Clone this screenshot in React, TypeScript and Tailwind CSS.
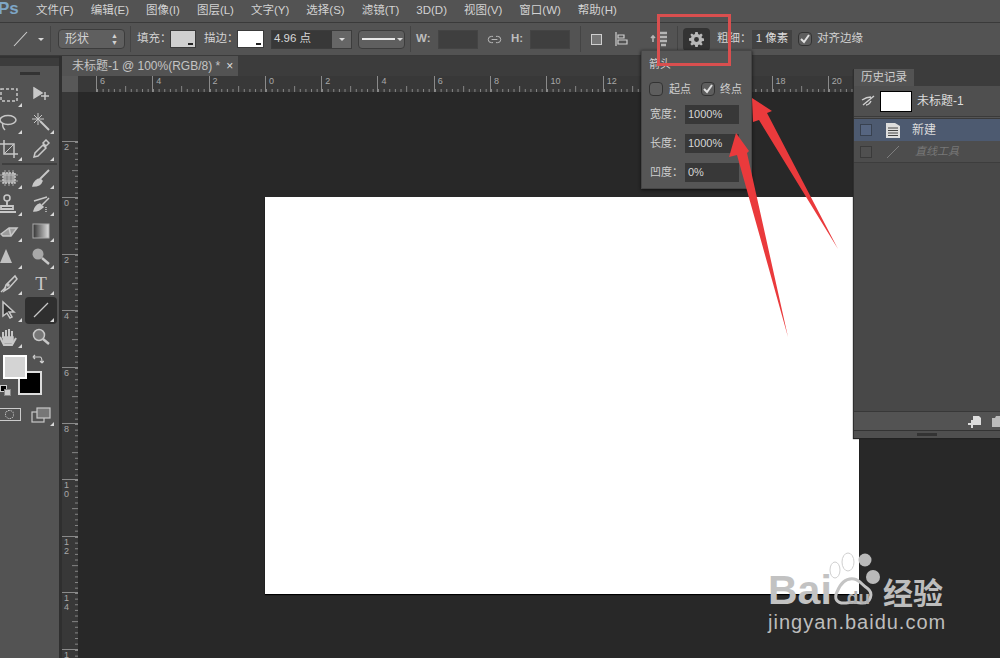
import type { ReactNode } from 'react'
import { Link2 } from 'lucide-react'

const cjk = "font-['Liberation_Sans','Noto_Sans_CJK_SC',sans-serif]"

const menus = ['文件(F)', '编辑(E)', '图像(I)', '图层(L)', '文字(Y)', '选择(S)', '滤镜(T)', '3D(D)', '视图(V)', '窗口(W)', '帮助(H)']
// 14, 16 sit under the arrow popup and 22 under the history panel
const hLabels = ['6', '4', '2', '0', '2', '4', '6', '8', '10', '12', '', '', '18', '20', '']
const vLabels = ['2', '0', '2', '4', '6', '8', '10', '12', '14', '16']

function HTicks() {
  return (
    <svg width="56" height="6" className="block">
      {[0, 1, 2, 3, 4, 5, 6, 7, 8, 9].map((i) => (
        <line key={i} x1={i * 5.63 + 0.5} x2={i * 5.63 + 0.5} y1={i === 5 ? 0 : 3} y2="6" stroke="#9a9a9a" strokeWidth="0.8" />
      ))}
    </svg>
  )
}

function VTicks() {
  return (
    <svg width="6" height="56" className="block shrink-0">
      {[0, 1, 2, 3, 4, 5, 6, 7, 8, 9].map((i) => (
        <line key={i} y1={i * 5.63 + 0.5} y2={i * 5.63 + 0.5} x1={i === 5 ? 0 : 3} x2="6" stroke="#9a9a9a" strokeWidth="0.8" />
      ))}
    </svg>
  )
}

function Tool({ children, active, corner = true, tight }: { children: ReactNode; active?: boolean; corner?: boolean; tight?: boolean }) {
  return (
    <div className={`relative flex w-8 items-center justify-center ${tight ? 'h-[26.500px]' : 'h-[27px]'} ${active ? 'rounded-sm bg-[#2f2f2f]' : ''}`}>
      {children}
      {corner && <span className="absolute right-[3px] bottom-[2px] h-0 w-0 border-b-[4px] border-l-[4px] border-b-[#d8d8d8] border-l-transparent" />}
    </div>
  )
}

function Ico({ children }: { children: ReactNode }) {
  return (
    <svg width="20" height="20" viewBox="0 0 20 20" fill="none" stroke="#c8c8c8" strokeWidth="1.5">
      {children}
    </svg>
  )
}

function Field({ label, value }: { label: string; value: string }) {
  return (
    <div className="flex h-[19px] items-center">
      <span className="w-[36px] pl-[1px] text-[11px] text-[#cfcfcf]">{label}</span>
      <span className="flex h-[19px] w-[54px] items-center bg-[#383838] pl-[3px] text-[11px] text-[#d6d6d6]">{value}</span>
    </div>
  )
}

function Check({ on }: { on?: boolean }) {
  return (
    <span className="flex h-[14px] w-[14px] items-center justify-center rounded-sm border border-[#333] bg-[#5e5e5e]">
      {on && (
        <svg width="12" height="12" viewBox="0 0 12 12" fill="none" stroke="#e0e0e0" strokeWidth="2">
          <path d="M2 6l3 3 5-7" />
        </svg>
      )}
    </span>
  )
}

export default function App() {
  return (
    <div className={`relative flex h-[658px] w-[1000px] flex-col overflow-hidden bg-[#282828] ${cjk}`}>
      {/* menu */}
      <div className="flex h-[23px] shrink-0 items-center border-b border-[#3a3a3a] bg-[#535353] text-[11.500px] text-[#d2d2d2]">
        <span className="-ml-[2px] w-[38px] -translate-y-[2px] text-[17px] font-bold text-[#7ea6c6]">Ps</span>
        <div className="flex gap-[17px]">
          {menus.map((m) => (
            <span key={m}>{m}</span>
          ))}
        </div>
      </div>

      {/* options */}
      <div className="flex h-[33px] shrink-0 items-center border-b border-[#3a3a3a] bg-[#535353] text-[11.500px] whitespace-nowrap text-[#d2d2d2]">
        <svg width="16" height="16" className="ml-[12px]" viewBox="0 0 16 16" stroke="#d0d0d0" strokeWidth="1.1"><line x1="2" y1="15" x2="15" y2="1" /></svg>
        <span className="ml-[10px] h-0 w-0 border-x-[3px] border-t-[3px] border-x-transparent border-t-[#d8d8d8]" />
        <span className="ml-[6px] h-[26px] w-px bg-[#444]" />
        <div className="ml-[7px] flex h-[20px] w-[67px] items-center justify-between rounded-sm border border-[#3c3c3c] bg-[#5f5f5f] px-[6px] text-[12px]">
          <span>形状</span>
          <span className="text-[7px] leading-[7px]">▲<br />▼</span>
        </div>
        <span className="ml-[5px] h-[26px] w-px bg-[#444]" />
        <span className="ml-[6px] w-[33px]">填充：</span>
        <span className="flex h-[18px] w-[26px] items-end justify-end border border-[#3a3a3a] bg-[#cfcfcf] p-[2px]"><span className="h-[2px] w-[5px] bg-[#222]" /></span>
        <span className="ml-[8px] w-[33px]">描边：</span>
        <span className="flex h-[18px] w-[27px] items-end justify-end border border-[#3a3a3a] bg-white p-[2px]"><span className="h-[2px] w-[5px] bg-[#222]" /></span>
        <div className="ml-[7px] flex h-[19px] w-[81px] items-center border border-[#3c3c3c] bg-[#383838]">
          <span className="flex-1 pl-[2px] text-[#d8d8d8]">4.96 点</span>
          <span className="flex h-full w-[19px] items-center justify-center bg-[#666]"><span className="h-0 w-0 border-x-[3px] border-t-[3px] border-x-transparent border-t-[#ddd]" /></span>
        </div>
        <div className="ml-[6px] flex h-[19px] w-[47px] items-center gap-[2px] rounded-sm border border-[#3c3c3c] bg-[#5f5f5f] pl-[3px]">
          <span className="h-[2px] w-[33px] bg-[#e8e8e8]" />
          <span className="h-0 w-0 border-x-[3px] border-t-[3px] border-x-transparent border-t-[#ddd]" />
        </div>
        <span className="ml-[5px] h-[26px] w-px bg-[#444]" />
        <span className="ml-[5px] w-[22px] font-bold text-[#bdbdbd]">W:</span>
        <span className="h-[19px] w-[40px] border border-[#444] bg-[#3f3f3f]" />
        <Link2 size={15} className="ml-[9px] text-[#b8b8b8]" strokeWidth={1.6} />
        <span className="ml-[9px] w-[19px] font-bold text-[#bdbdbd]">H:</span>
        <span className="h-[19px] w-[40px] border border-[#444] bg-[#3f3f3f]" />
        <span className="ml-[10px] h-[26px] w-px bg-[#444]" />
        <span className="ml-[10px] h-[11px] w-[11px] border border-[#cfcfcf] bg-[#777]" />
        <svg width="14" height="16" className="ml-[13px]" viewBox="0 0 14 16" fill="none" stroke="#cfcfcf" strokeWidth="1.2"><path d="M1 1v14M3 4h6v3H3zM3 9h9v4H3z" /></svg>
        <svg width="20" height="18" className="ml-[20px]" viewBox="0 0 20 18" fill="none" stroke="#b5b5b5" strokeWidth="1.6"><path d="M4 12V6M2 8l2-2 2 2" /><path d="M11 3h7M10 7h8M11 11h7M12 15h5" strokeWidth="2.4" /></svg>
        <span className="ml-[8px] h-[26px] w-px bg-[#444]" />
        <div className="ml-[5px] flex h-[23px] w-[27px] items-center justify-center rounded-sm bg-[#333]">
          <svg width="15" height="15" viewBox="0 0 16 16"><path fill="#b8b8b8" fillRule="evenodd" d="M6.7 0h2.6l.4 2.2 1.3.6L13 1.5 14.6 3.3l-1.3 1.9.5 1.3 2.2.4v2.6l-2.2.4-.5 1.3 1.3 1.9L13 14.5l-2-1.3-1.3.6-.4 2.2H6.7l-.4-2.2-1.3-.6L3 14.5 1.4 12.7l1.3-1.9-.5-1.3L0 9.2V6.6l2.2-.4.5-1.3-1.3-1.9L3 1.500l2 1.300 1.300-.6zM8 5.400a2.600 2.600 0 100 5.200 2.600 2.600 0 000-5.200z" /></svg>
        </div>
        <span className="ml-[7px] w-[35px]">粗细：</span>
        <span className="flex h-[19px] w-[40px] items-center justify-center bg-[#424242] text-[#dcdcdc]">1 像素</span>
        <span className="ml-[6px]"><Check on /></span>
        <span className="ml-[5px]">对齐边缘</span>
      </div>

      <div className="flex min-h-0 flex-1">
        {/* tools */}
        <div className="flex w-[62px] shrink-0 flex-col border-r-[3px] border-[#2f2f2f] bg-[#535353]">
          <div className="h-[2px] bg-[#333]" />
          <div className="flex h-[8px] items-center bg-[#3c3c3c]" />
          <div className="flex h-[14px] items-center justify-center"><span className="h-[3px] w-[20px] bg-[#333]" /></div>
          <div className="-ml-[7px] mt-[1.500px] grid w-[64px] grid-cols-2">
            <Tool><Ico><rect x="2" y="4" width="16" height="12" strokeDasharray="3 2" /></Ico></Tool>
            <Tool corner={false}><Ico><path d="M3 3l8 5-8 5z" fill="#c8c8c8" /><path d="M14 7v8M10 11h8" /></Ico></Tool>
            <Tool><Ico><ellipse cx="9" cy="8" rx="8" ry="4.500" /><path d="M4 11c-1 3 1 6 2 7" /></Ico></Tool>
            <Tool><Ico><path d="M9 9l9 9" strokeWidth="2" /><path d="M7 1v12M1 7h12M3 3l8 8M11 3l-8 8" strokeWidth="1" /></Ico></Tool>
            <Tool><Ico><path d="M5 1v14h14M1 5h14v14" /><path d="M5 15L15 5" strokeWidth="1" /></Ico></Tool>
            <Tool><Ico><path d="M3 18l1-4 8-8 3 3-8 8zM12 4l3-3 3 3-3 3z" /></Ico></Tool>
          </div>
          <div className="mx-[2px] h-[2px] bg-[#3f3f3f]" />
          <div className="-ml-[7px] grid w-[64px] grid-cols-2">
            <Tool tight><Ico><rect x="4" y="5" width="12" height="10" fill="#8f8f8f" strokeDasharray="2 1" /><path d="M6 2v16M10 2v16M14 2v16M1 7h18M1 13h18" strokeWidth="0.7" /></Ico></Tool>
            <Tool tight><Ico><path d="M18 2L9 11" strokeWidth="2" /><path d="M2 18c1-4 4-7 7-7l2 2c-1 3-4 5-9 5z" fill="#c8c8c8" /></Ico></Tool>
            <Tool tight><Ico><circle cx="8" cy="4" r="3" /><path d="M8 7v4M2 12h12v3H2zM1 18h16" strokeWidth="1.800" /></Ico></Tool>
            <Tool tight><Ico><path d="M3 17c1-4 3-6 6-7l3 3c-2 2-5 4-9 4z" fill="#c8c8c8" /><path d="M3 7l13-4M11 11l7-7" /><path d="M15 13v5" strokeDasharray="1 1" /></Ico></Tool>
            <Tool tight><Ico><path d="M2 13l8-6h8l-6 8H4z" fill="#9c9c9c" /><path d="M10 7l2 8" /></Ico></Tool>
            <Tool tight><svg width="18" height="16"><defs><linearGradient id="g"><stop offset="0" stopColor="#333" /><stop offset="1" stopColor="#ddd" /></linearGradient></defs><rect x="1" y="1" width="16" height="14" fill="url(#g)" stroke="#aaa" /></svg></Tool>
            <Tool tight><Ico><path d="M7 2l6 14H1z" fill="#c0c0c0" stroke="none" /></Ico></Tool>
            <Tool tight><Ico><circle cx="7" cy="7" r="5.500" fill="#a8a8a8" stroke="none" /><path d="M11 11l7 6" strokeWidth="2.400" /></Ico></Tool>
            <Tool tight><Ico><path d="M16 2l2 3-8 9-5 3 2-6z" /><circle cx="9" cy="11" r="1" /><path d="M2 18l5-5" /></Ico></Tool>
            <Tool tight><span className="font-['Liberation_Serif',serif] text-[19px] text-[#c8c8c8]">T</span></Tool>
            <Tool tight><Ico><path d="M4 2v14l4-3 3 5 2-1-3-5h5z" fill="#333" /></Ico></Tool>
            <Tool tight active><Ico><line x1="3" y1="17" x2="17" y2="3" strokeWidth="1.200" /></Ico></Tool>
            <Tool tight><Ico><path d="M4 11V5M7 10V3M10 10V2M13 10V4M1 10l4 8h8l4-7" strokeWidth="2" /><path d="M4 10h10v6H5z" fill="#c8c8c8" /></Ico></Tool>
            <Tool tight corner={false}><Ico><circle cx="8" cy="8" r="5.500" fill="#777" /><path d="M12 12l6 5" strokeWidth="2.400" /></Ico></Tool>
          </div>
          <div className="relative mt-[3px] h-[44px]">
            <span className="absolute top-[2px] left-[3px] z-10 h-[24px] w-[24px] border-2 border-white bg-[#d4d4d4]" />
            <span className="absolute top-[18px] left-[18px] h-[24px] w-[24px] border-2 border-[#ddd] bg-black" />
            <span className="absolute top-[32px] left-0 h-[7px] w-[7px] border border-[#ccc] bg-black" />
            <span className="absolute top-[36px] left-[4px] h-[7px] w-[7px] border border-[#888] bg-[#ccc]" />
            <svg width="12" height="12" className="absolute top-0 left-[32px]" viewBox="0 0 12 12" fill="none" stroke="#d0d0d0" strokeWidth="1.200"><path d="M2 4h6c2 0 2 2 2 5M1 4l2-2M1 4l2 2M10 10l-2-2M10 10l2-2" /></svg>
          </div>
          <div className="-ml-[7px] mt-[4px] grid w-[64px] grid-cols-2">
            <Tool corner={false}><span className="flex h-[13px] w-[23px] items-center justify-center border border-[#ccc]"><span className="h-[9px] w-[9px] rounded-full border border-dotted border-[#ddd]" /></span></Tool>
            <Tool><svg width="20" height="18" fill="none" stroke="#c8c8c8" strokeWidth="1.200"><rect x="1" y="6" width="12" height="10" /><rect x="6" y="2" width="13" height="10" fill="#777" /></svg></Tool>
          </div>
        </div>

        {/* document */}
        <div className="flex min-w-0 flex-1 flex-col">
          <div className="flex h-[20px] shrink-0 bg-[#3c3c3c]">
            <div className="flex w-[176px] items-center bg-[#535353] pl-[10px] text-[12px] whitespace-nowrap text-[#c4c4c4]">
              未标题-1 @ 100%(RGB/8) *
              <span className="ml-[6px] text-[12px] leading-none text-[#ddd]">×</span>
            </div>
          </div>
          <div className="flex h-[16px] shrink-0 overflow-hidden bg-[#383838]">
            <div className="h-full w-[16px] shrink-0 bg-[#585858]" />
            <div className="w-[18px] shrink-0" />
            {hLabels.map((l, i) => (
              <div key={i} className="flex h-[16px] w-[56.300px] shrink-0 flex-col border-l border-[#8a8a8a]">
                <span className="h-[10px] pl-[3px] text-[9px] leading-[11px] text-[#a8a8a8]">{l}</span>
                <HTicks />
              </div>
            ))}
          </div>
          <div className="flex min-h-0 flex-1">
            <div className="flex w-[16px] shrink-0 flex-col overflow-hidden bg-[#383838]">
              <div className="h-[49px] shrink-0" />
              {vLabels.map((l, i) => (
                <div key={i} className="flex h-[56.400px] shrink-0 border-t border-[#8a8a8a]">
                  <span className="w-[10px] pt-[1px] pl-[2px] text-[9px] leading-[9px] break-all text-[#a8a8a8]">{l}</span>
                  <VTicks />
                </div>
              ))}
            </div>
            <div className="min-w-0 flex-1 pt-[105px] pl-[187px]">
              <div className="h-[397px] w-[594px] bg-white shadow-[0_1px_1px_#000]" />
            </div>
          </div>
        </div>
      </div>

      {/* arrow settings popup */}
      <div className="absolute top-[50px] left-[641px] flex h-[139px] w-[111px] flex-col border border-[#464646] bg-[#565656] pt-[5px] pl-[7px] shadow-[0_1px_3px_#111]">
        <span className="text-[11px] text-[#cfcfcf]">箭头</span>
        <div className="mt-[8px] flex items-center text-[11px] text-[#cfcfcf]">
          <Check />
          <span className="ml-[6px]">起点</span>
          <span className="ml-[10px]"><Check on /></span>
          <span className="ml-[5px]">终点</span>
        </div>
        <div className="mt-[8px] flex flex-col gap-[10px]">
          <Field label="宽度：" value="1000%" />
          <Field label="长度：" value="1000%" />
          <Field label="凹度：" value="0%" />
        </div>
      </div>

      {/* history panel */}
      <div className="absolute top-[69px] left-[853px] flex h-[369px] w-[147px] flex-col border-l border-[#2f2f2f] bg-[#484848] text-[12px] text-[#dcdcdc] shadow-[0_1px_1px_#222]">
        <div className="flex h-[17px] shrink-0 bg-[#3c3c3c]">
          <span className="flex w-[60px] items-center justify-center bg-[#535353] text-[11.500px] text-[#cfcfcf]">历史记录</span>
        </div>
        <div className="flex h-[30px] shrink-0 items-center bg-[#4f4f4f] pl-[7px]">
          <svg width="14" height="14" viewBox="0 0 14 14" fill="none" stroke="#cfcfcf" strokeWidth="1.400"><path d="M1 6c3-2 6-3 9-3M2 11l11-9M5 11c2 0 4-2 5-4" /></svg>
          <span className="ml-[5px] h-[21px] w-[32px] border border-black bg-white" />
          <span className="ml-[5px]">未标题-1</span>
        </div>
        <div className="h-[3px] shrink-0 border-y border-[#3a3a3a] bg-[#555]" />
        <div className="flex h-[22px] shrink-0 items-center bg-[#4d5a70] pl-[6px]">
          <span className="h-[12px] w-[12px] border border-[#38414f] bg-[#566580]" />
          <svg width="14" height="16" className="ml-[14px]" viewBox="0 0 14 16" fill="#ddd"><path d="M0 1h9l5 3v12H0z" /><path d="M2 6h10M2 8.500h10M2 11h10M2 13.500h10" stroke="#444" /></svg>
          <span className="ml-[12px]">新建</span>
        </div>
        <div className="flex h-[22px] shrink-0 items-center border-b border-[#3d3d3d] bg-[#4d4d4d] pl-[6px] text-[#777]">
          <span className="h-[12px] w-[12px] border border-[#3a3a3a] bg-[#505050]" />
          <svg width="14" height="14" className="ml-[14px]" stroke="#7e7e7e"><line x1="1" y1="13" x2="13" y2="1" /></svg>
          <span className="ml-[15px] text-[11px] italic">直线工具</span>
        </div>
        <div className="flex-1" />
        <div className="flex h-[19px] shrink-0 items-center justify-end gap-[11px] border-t border-[#383838] bg-[#535353]">
          <svg width="14" height="13" viewBox="0 0 14 13"><path fill="#ddd" d="M6 1h6l2 2v7H6zM1 8h3V5h2v3h3v2H6v3H4v-3H1z" /></svg>
          <svg width="8" height="12" viewBox="0 0 8 12"><path fill="#bbb" d="M0 3h3l1-2h4v11H0z" /></svg>
        </div>
        <div className="flex h-[8px] shrink-0 items-center justify-center border-t border-[#333] bg-[#4f4f4f]">
          <span className="h-[3px] w-[20px] bg-[#333]" />
        </div>
      </div>

      {/* red annotations */}
      <div className="pointer-events-none absolute top-[14px] left-[657px] h-[52px] w-[74px] border-[3px] border-[#d94f4f]" />
      <svg className="pointer-events-none absolute top-0 left-0" width="1000" height="658">
        <path fill="#ea3a3c" d="M752 98L772 111 767 113 838 249 759 120 753 122z" />
        <path fill="#ea3a3c" d="M736 133L749 151 747 153 788 337 737 155 729 157z" />
      </svg>

      {/* watermark */}
      <svg className="pointer-events-none absolute top-[548px] left-[820px]" width="64" height="64" viewBox="0 0 64 64">
        <circle cx="45" cy="12" r="6.500" fill="#b9b9b9" />
        <circle cx="53" cy="29" r="7" fill="#b9b9b9" />
        <g fill="none" stroke="#cfcfcf" strokeWidth="1">
          <ellipse cx="28" cy="14" rx="6" ry="9" />
          <ellipse cx="15" cy="22" rx="5" ry="8" />
        </g>
        <path d="M17 44c4-10 10-14 17-13 6 1 8 6 13 9 7 5 4 16-6 15-6-1-10-1-15 0-10 1-12-5-9-11z" fill="none" stroke="#c4c4c4" strokeWidth="3" />
      </svg>
      <div className="pointer-events-none absolute top-[569px] left-[768px] flex w-[190px] flex-col">
        <div className="flex h-[42px] items-baseline">
          <span className="text-[41px] leading-[42px] font-bold text-[#c2c2c2]">Bai</span>
          <span className="ml-[15px] text-[19px] leading-[42px] font-bold text-[#b0b0b0]">du</span>
          <span className="ml-[13px] text-[30px] leading-[42px] font-bold text-[#bdbdbd]">经验</span>
        </div>
        <span className="-mt-px text-[20px] leading-[24px] tracking-[1px] text-[#bdbdbd]">jingyan.baidu.com</span>
      </div>
    </div>
  )
}
